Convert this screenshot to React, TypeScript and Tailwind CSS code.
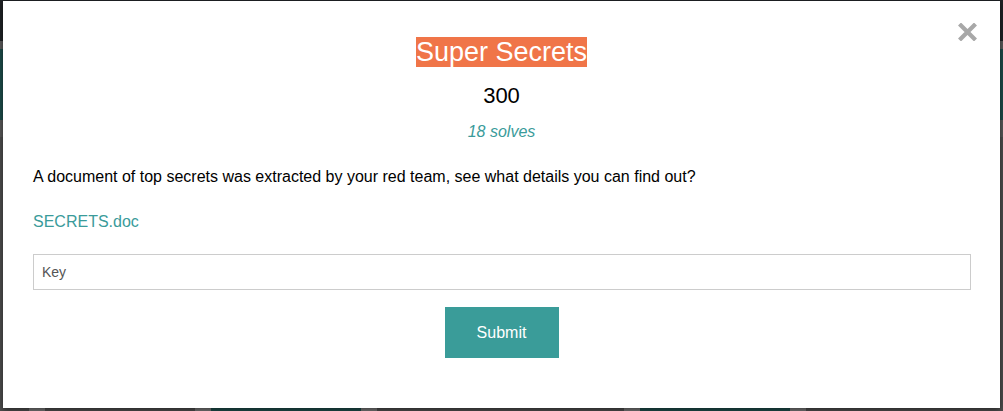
import React from "react";

export default function App() {
  return (
    <div
      className="relative w-[1003px] h-[411px] overflow-hidden bg-[#4d4d4d] flex flex-col"
      style={{ fontFamily: '"Liberation Sans", Arial, sans-serif' }}
    >
      {/* page behind the dimmed overlay */}
      <div className="h-[41px] bg-[#1f2225]" />
      <div className="h-[8px] bg-[#5a5a5a]" />
      <div className="h-[71px] bg-[#1d4c49]" />
      <div className="h-[17px] bg-[#585858]" />
      <div className="flex-1" />
      <div className="h-[3px] flex">
        <div className="w-[29px]" />
        <div className="w-[16px] bg-[#767676]" />
        <div className="w-[150px]" />
        <div className="w-[16px] bg-[#767676]" />
        <div className="w-[150px] bg-[#1d4c49]" />
        <div className="w-[16px] bg-[#767676]" />
        <div className="w-[247px]" />
        <div className="w-[16px] bg-[#767676]" />
        <div className="w-[150px] bg-[#1d4c49]" />
        <div className="w-[16px] bg-[#767676]" />
      </div>

      {/* modal */}
      <div className="absolute left-[3px] top-[1px] w-[997px] h-[407px] bg-white px-[30px] flex flex-col items-stretch shadow-[0_2px_6px_rgba(0,0,0,0.5)]">
        <button
          aria-label="Close"
          className="absolute top-[22px] right-[23px] w-[19px] h-[18px] flex items-center justify-center"
        >
          <svg width="19" height="18" viewBox="0 0 19 18">
            <path
              d="M3 2.5 L16 15.5 M16 2.5 L3 15.5"
              stroke="#a8a8a8"
              strokeWidth="4.2"
              strokeLinecap="square"
            />
          </svg>
        </button>

        <h2 className="mt-[36px] text-center text-[27px] leading-[30px] font-normal">
          <span className="bg-[#f07548] text-white">Super Secrets</span>
        </h2>
        <div className="mt-[16px] text-center text-[22px] leading-[26px] text-black">300</div>
        <div className="mt-[13px] text-center text-[16px] leading-[20px] italic text-[#3a9b9a]">
          18 solves
        </div>
        <p className="mt-[25px] text-[16px] leading-[20px] text-black">
          A document of top secrets was extracted by your red team, see what details you can find out?
        </p>
        <a className="mt-[25px] text-[16px] leading-[20px] text-[#3a9b9a] self-start cursor-pointer">
          SECRETS.doc
        </a>
        <input
          className="mt-[22px] h-[36px] w-[938px] border border-[#cccccc] px-[8px] text-[14px] text-[#555] placeholder:text-[#555] outline-none"
          placeholder="Key"
          style={{ fontFamily: '"Liberation Sans", Arial, sans-serif' }}
        />
        <div className="mt-[17px] flex justify-center">
          <button className="w-[114px] h-[51px] bg-[#3a9c99] text-white text-[16px]">
            Submit
          </button>
        </div>
      </div>
    </div>
  );
}
